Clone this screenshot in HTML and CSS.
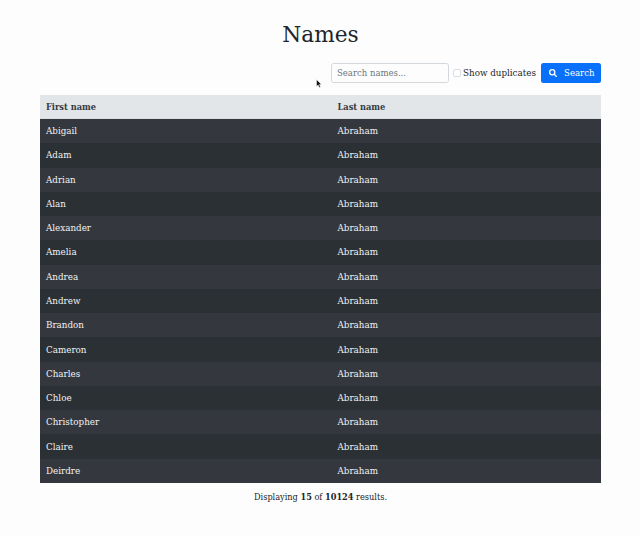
FILE: index.html
```html
<!DOCTYPE html>
<html lang="en">
<head>
<meta charset="utf-8">
<title>Names</title>
<link rel="stylesheet" href="styles.css">
</head>
<body>
<main class="page">
  <h1 class="title">Names</h1>
  <form class="search">
    <input class="field" type="text" placeholder="Search names...">
    <label class="check"><input class="box" type="checkbox"><span class="check-text">Show duplicates</span></label>
    <button class="button" type="button">
      <svg class="icon" viewBox="0 0 512 512"><circle cx="208" cy="208" r="164"/><path d="M330 330L464 464"/></svg>
      <span class="button-text">Search</span>
    </button>
  </form>
  <table class="names">
    <thead><tr><th>First name</th><th>Last name</th></tr></thead>
    <tbody>
      <tr><td>Abigail</td><td>Abraham</td></tr>
      <tr><td>Adam</td><td>Abraham</td></tr>
      <tr><td>Adrian</td><td>Abraham</td></tr>
      <tr><td>Alan</td><td>Abraham</td></tr>
      <tr><td>Alexander</td><td>Abraham</td></tr>
      <tr><td>Amelia</td><td>Abraham</td></tr>
      <tr><td>Andrea</td><td>Abraham</td></tr>
      <tr><td>Andrew</td><td>Abraham</td></tr>
      <tr><td>Brandon</td><td>Abraham</td></tr>
      <tr><td>Cameron</td><td>Abraham</td></tr>
      <tr><td>Charles</td><td>Abraham</td></tr>
      <tr><td>Chloe</td><td>Abraham</td></tr>
      <tr><td>Christopher</td><td>Abraham</td></tr>
      <tr><td>Claire</td><td>Abraham</td></tr>
      <tr><td>Deirdre</td><td>Abraham</td></tr>
    </tbody>
  </table>
  <p class="summary">Displaying <b>15</b> of <b>10124</b> results.</p>
</main>
<svg class="cursor" viewBox="0 0 12 18"><path d="M1 1V15L4.3 12L6.5 17L9 16L6.8 11H11Z"/></svg>
</body>
</html>
```
FILE: styles.css
```css
* { box-sizing: border-box; }
body {
  margin: 0;
  background: #fdfdfd;
  color: #212529;
  font: 8.75px/14px "DejaVu Serif", serif;
}
.page { width: 561px; margin: 0 auto 0 40px; padding-top: 21px; }
.title { margin: 0 0 14px; font-size: 21.7px; font-weight: 400; line-height: 28px; text-align: center; }
.search { display: flex; justify-content: flex-end; align-items: center; height: 20px; margin: 0 0 12px; }
.field {
  width: 118px;
  height: 20px;
  padding: 0 5px;
  border: 1px solid #d3d8dd;
  border-radius: 2.5px;
  background: #fdfdfd;
  font: inherit;
  font-size: 8.5px;
}
.field::placeholder { color: #6c757d; opacity: 1; }
.check { display: flex; align-items: center; margin-left: 4px; }
.box {
  appearance: none;
  width: 8px;
  height: 8px;
  margin: 0 2px 0 0;
  border: 1px solid #dcdedf;
  border-radius: 2px;
  background: #fff;
}
.check-text { width: 73px; white-space: nowrap; }
.button {
  display: flex;
  align-items: center;
  width: 60px;
  height: 20px;
  margin-left: 5px;
  padding: 0 0 0 8px;
  border: 0;
  border-radius: 2.5px;
  background: #0870fa;
  color: #fff;
  font: inherit;
  font-size: 8.6px;
}
.icon { width: 8px; height: 8px; margin-right: 7px; fill: none; stroke: #fff; stroke-width: 85; stroke-linecap: round; }
.names { width: 100%; table-layout: fixed; border-collapse: separate; border-spacing: 0; }
.names th, .names td { padding: 0 6px; text-align: left; }
.names th:first-child { width: 291.5px; }
.names th { height: 24px; background: #e2e6e9; color: #343a40; font-size: 8.25px; border-bottom: 1px solid #d8dedf; }
.names td { height: 24.27px; color: #f1f2f3; }
.names tbody tr { background: #2b3034; }
.names tbody tr:nth-child(odd) { background: #34383e; }
.summary { margin: 7px 0 0; font-family: "DejaVu Serif Condensed", "DejaVu Serif", serif; font-size: 9.1px; font-stretch: condensed; text-align: center; }
.cursor { position: absolute; left: 316px; top: 79px; width: 6px; height: 9px; fill: #111; stroke: #fff; stroke-width: 1; }
```
